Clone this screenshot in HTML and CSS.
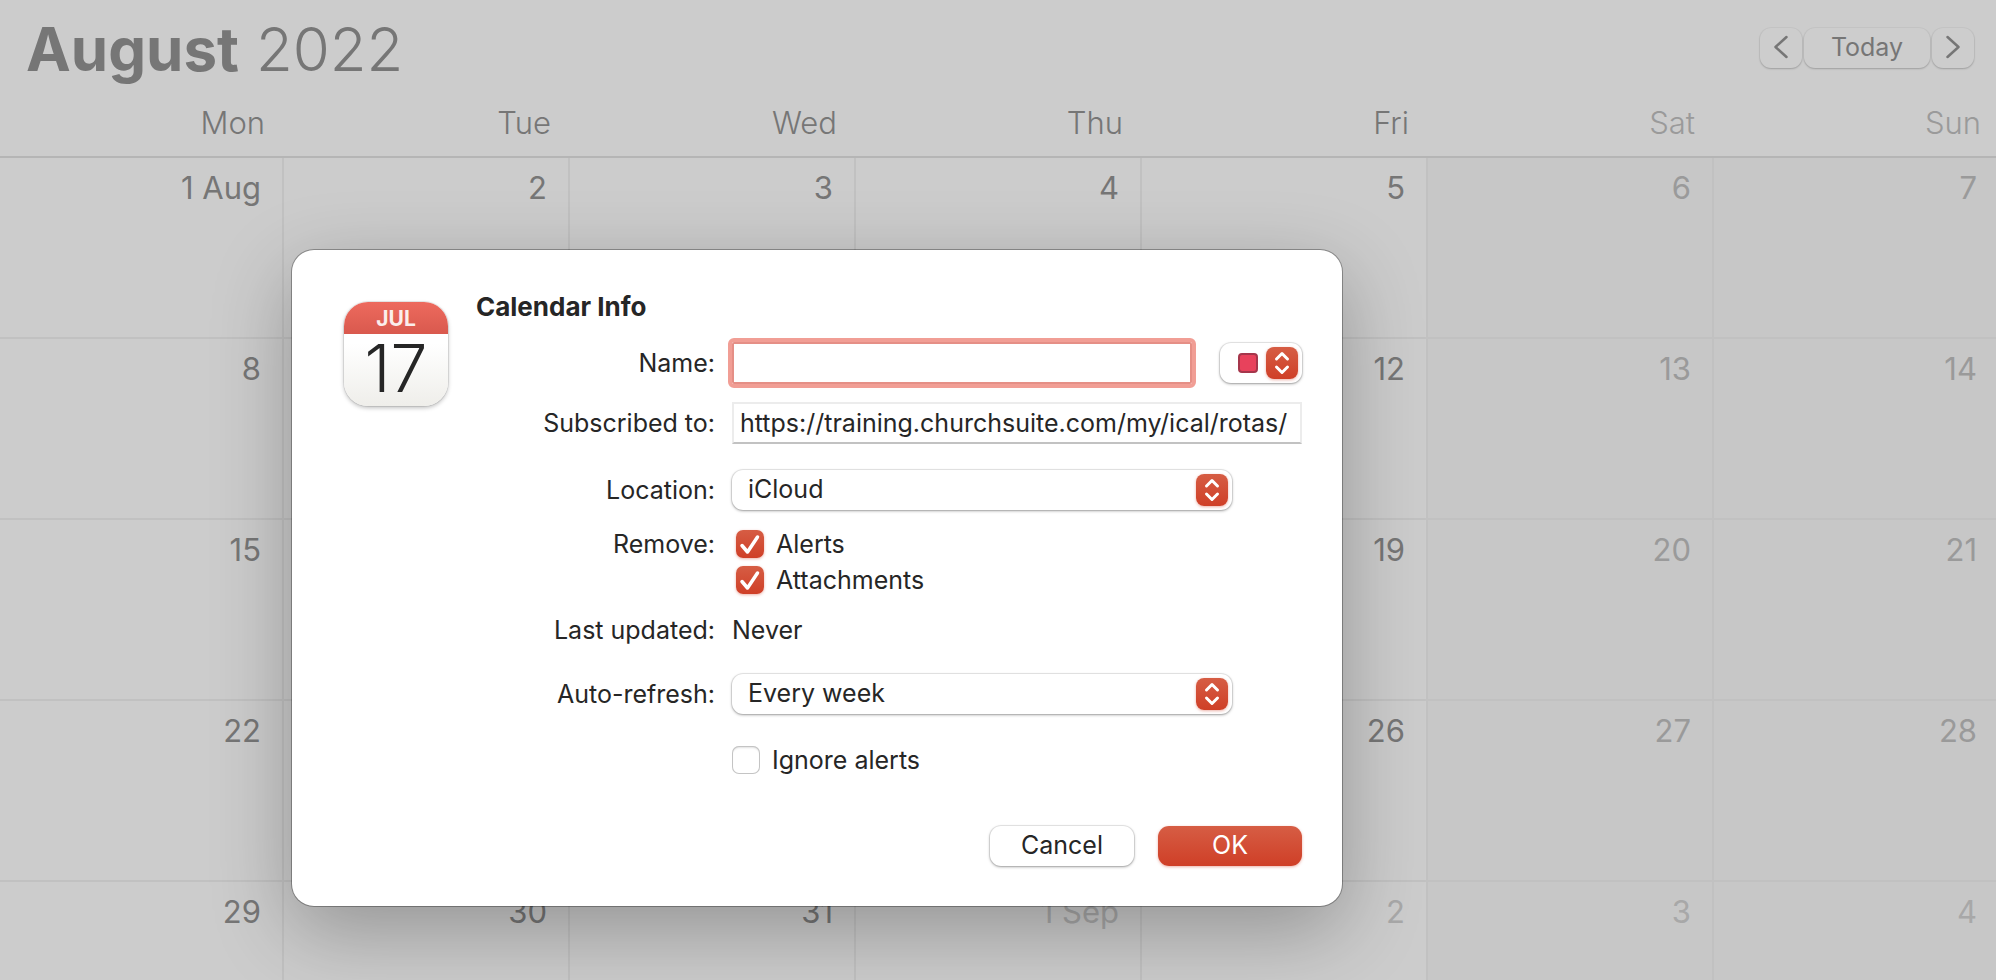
FILE: index.html
```html
<!DOCTYPE html>
<html lang="en">
<head>
    <meta charset="UTF-8">
    <meta name="viewport" content="width=device-width, initial-scale=1.0">
    <title>Calendar</title>
    <link rel="stylesheet" href="styles.css">
</head>
<body>
    <main class="calendar">
        <header class="top-bar">
            <h1 class="month"><strong>August</strong> 2022</h1>
            <div class="nav">
                <button type="button" class="nav-btn" aria-label="Previous month">
                    <svg width="14" height="24" viewBox="0 0 14 24"><path d="M12.500 2 1.500 12l11 10"/></svg>
                </button>
                <button type="button" class="nav-btn today">Today</button>
                <button type="button" class="nav-btn" aria-label="Next month">
                    <svg width="14" height="24" viewBox="0 0 14 24"><path d="M1.500 2 12.500 12 1.500 22"/></svg>
                </button>
            </div>
        </header>
        <table class="month-grid">
            <thead>
                <tr>
                    <th>Mon</th>
                    <th>Tue</th>
                    <th>Wed</th>
                    <th>Thu</th>
                    <th>Fri</th>
                    <th class="off">Sat</th>
                    <th class="off">Sun</th>
                </tr>
            </thead>
            <tbody>
                <tr>
                    <td>1 Aug</td>
                    <td>2</td>
                    <td>3</td>
                    <td>4</td>
                    <td>5</td>
                    <td class="weekend">6</td>
                    <td class="weekend">7</td>
                </tr>
                <tr>
                    <td>8</td>
                    <td></td>
                    <td></td>
                    <td></td>
                    <td>12</td>
                    <td class="weekend">13</td>
                    <td class="weekend">14</td>
                </tr>
                <tr>
                    <td>15</td>
                    <td></td>
                    <td></td>
                    <td></td>
                    <td>19</td>
                    <td class="weekend">20</td>
                    <td class="weekend">21</td>
                </tr>
                <tr>
                    <td>22</td>
                    <td></td>
                    <td></td>
                    <td></td>
                    <td>26</td>
                    <td class="weekend">27</td>
                    <td class="weekend">28</td>
                </tr>
                <tr>
                    <td>29</td>
                    <td>30</td>
                    <td>31</td>
                    <td class="next-month">1 Sep</td>
                    <td class="next-month">2</td>
                    <td class="weekend next-month">3</td>
                    <td class="weekend next-month">4</td>
                </tr>
            </tbody>
        </table>
    </main>

    <form class="dialog" role="dialog" aria-labelledby="dialog-title">
        <div class="app-icon">
            <div class="icon-month">JUL</div>
            <div class="icon-day">17</div>
        </div>
        <div class="fields">
            <h2 class="dialog-title" id="dialog-title">Calendar Info</h2>

            <div class="row">
                <label class="label" for="name">Name:</label>
                <div class="name-line">
                    <input type="text" id="name" class="name-input">
                    <div class="select color-select">
                        <span class="swatch"></span>
                        <select aria-label="Calendar colour">
                            <option value="red" label=" "></option>
                        </select>
                        <svg class="arrows" viewBox="0 0 32 32"><path d="M10.500 12 16 6.500l5.500 5.500M10.500 20l5.500 5.500 5.500-5.500"/></svg>
                    </div>
                </div>
            </div>

            <div class="row">
                <label class="label" for="url">Subscribed to:</label>
                <input type="text" id="url" class="url-input" value="https://training.churchsuite.com/my/ical/rotas/">
            </div>

            <div class="row row-location">
                <label class="label" for="location">Location:</label>
                <div class="select">
                    <select id="location">
                        <option>iCloud</option>
                    </select>
                    <svg class="arrows" viewBox="0 0 32 32"><path d="M10.500 12 16 6.500l5.500 5.500M10.500 20l5.500 5.500 5.500-5.500"/></svg>
                </div>
            </div>

            <div class="row row-tight row-top">
                <span class="label">Remove:</span>
                <div class="checks">
                    <label class="check"><input type="checkbox" checked>Alerts</label>
                    <label class="check"><input type="checkbox" checked>Attachments</label>
                </div>
            </div>

            <div class="row row-tight">
                <span class="label">Last updated:</span>
                <span>Never</span>
            </div>

            <div class="row row-loose">
                <label class="label" for="refresh">Auto-refresh:</label>
                <div class="select">
                    <select id="refresh">
                        <option>Every week</option>
                    </select>
                    <svg class="arrows" viewBox="0 0 32 32"><path d="M10.500 12 16 6.500l5.500 5.500M10.500 20l5.500 5.500 5.500-5.500"/></svg>
                </div>
            </div>

            <div class="row row-loose">
                <span></span>
                <label class="check"><input type="checkbox">Ignore alerts</label>
            </div>

            <div class="actions">
                <button type="button" class="btn">Cancel</button>
                <button type="button" class="btn btn-primary">OK</button>
            </div>
        </div>
    </form>
</body>
</html>
```
FILE: styles.css
```css
* {
    box-sizing: border-box;
}
body {
    margin: 0;
    height: 100vh;
    overflow: hidden;
    position: relative;
    background-color: #cccccc;
    color: #767676;
    font-family: Inter, "Liberation Sans", sans-serif;
    font-size: 25px;
    line-height: 32px;
}
button, input, select {
    font: inherit;
    color: inherit;
    margin: 0;
}

/* Month view */
.calendar {
    height: 100vh;
    overflow: hidden;
}
.top-bar {
    display: flex;
    justify-content: space-between;
    height: 98px;
    padding: 0 22px 0 26px;
}
.month {
    margin: 0;
    font-size: 60px;
    line-height: 98px;
    font-weight: 300;
}
.month strong {
    font-weight: 700;
}
.nav {
    display: flex;
    gap: 2px;
    padding-top: 28px;
}
.nav-btn {
    display: flex;
    align-items: center;
    justify-content: center;
    width: 42px;
    height: 40px;
    padding: 0 2px 2px;
    border: none;
    border-radius: 11px;
    background-color: #cdcdcd;
    box-shadow: 0 0 0 1px rgba(0, 0, 0, 0.03), 0 1px 2px rgba(0, 0, 0, 0.2);
}
.nav-btn svg {
    fill: none;
    stroke: #767676;
    stroke-width: 2.5;
    stroke-linecap: round;
    stroke-linejoin: round;
}
.today {
    width: 126px;
}
.month-grid {
    width: calc(100% + 6px);
    margin-left: -2px;
    table-layout: fixed;
    border-collapse: separate;
    border-spacing: 0;
    text-align: right;
    font-size: 31px;
    line-height: 40px;
}
.month-grid th {
    height: 60px;
    padding: 5px 19px 0 0;
    vertical-align: top;
    text-align: right;
    font-weight: 300;
    border-bottom: 2px solid #b5b5b5;
}
.month-grid td {
    height: 181px;
    padding: 10px 21px 0 0;
    vertical-align: top;
    border-right: 2px solid #c1c1c1;
    border-bottom: 2px solid #c1c1c1;
}
.month-grid .off {
    color: #9a9a9a;
}
.month-grid .weekend {
    background-color: #c7c7c7;
    color: #9a9a9a;
}
.month-grid .next-month {
    color: #a8a8a8;
}

/* Calendar info dialog */
.dialog {
    position: absolute;
    top: 250px;
    left: 292px;
    width: 1050px;
    display: flex;
    gap: 28px;
    padding: 40px 40px 40px 52px;
    border-radius: 22px;
    background-color: #ffffff;
    color: #262626;
    box-shadow: 0 0 0 1px rgba(0, 0, 0, 0.3), 0 24px 80px rgba(0, 0, 0, 0.28);
}
.app-icon {
    flex: none;
    width: 104px;
    height: 104px;
    margin-top: 12px;
    border-radius: 24px;
    text-align: center;
    background: linear-gradient(#ffffff 40%, #efeeea);
    box-shadow: 0 0 0 1px rgba(0, 0, 0, 0.08), 0 2px 4px rgba(0, 0, 0, 0.25);
}
.icon-month {
    height: 32px;
    line-height: 34px;
    border-radius: 24px 24px 0 0;
    font-size: 21px;
    font-weight: 700;
    color: #fbeeec;
    background: linear-gradient(#ed6a5e, #d9594e);
}
.icon-day {
    line-height: 68px;
    font-size: 66px;
    font-weight: 300;
}
.fields {
    flex: 1;
    min-width: 0;
}
.dialog-title {
    margin: 0;
    font-size: 26px;
    line-height: 34px;
    font-weight: 700;
}
.row {
    display: grid;
    grid-template-columns: 239px 1fr;
    column-gap: 17px;
    align-items: center;
    margin-top: 18px;
}
.row-location {
    margin-top: 28px;
}
.row-tight {
    margin-top: 16px;
}
.row-loose {
    margin-top: 28px;
}
.row-top {
    align-items: start;
}
.row-top .label {
    line-height: 36px;
}
.label {
    text-align: right;
}
.name-line {
    display: flex;
    align-items: center;
    gap: 28px;
}
.name-input {
    flex: 1;
    min-width: 0;
    height: 42px;
    padding: 0 8px;
    border: 2px solid #e58f86;
    outline: 4px solid #f19e95;
    border-radius: 2px;
    background-color: #ffffff;
}
.url-input {
    width: 100%;
    height: 42px;
    padding: 0 6px;
    border: 2px solid #ececec;
    border-bottom-color: #c2c2c2;
    background-color: #ffffff;
}
.row-location {
    margin-top: 26px;
}
.select {
    position: relative;
    width: 500px;
    height: 40px;
}
.select select {
    appearance: none;
    width: 100%;
    height: 40px;
    padding: 0 48px 2px 16px;
    border: none;
    border-radius: 11px;
    background-color: #ffffff;
    box-shadow: 0 0 0 1px rgba(0, 0, 0, 0.08), 0 1px 3px rgba(0, 0, 0, 0.35);
}
.color-select {
    width: 82px;
}
.swatch {
    position: absolute;
    top: 10px;
    left: 18px;
    width: 20px;
    height: 20px;
    border: 2px solid #a5364b;
    border-radius: 4px;
    background-color: #e8425c;
    pointer-events: none;
}
.arrows {
    position: absolute;
    top: 4px;
    right: 4px;
    width: 32px;
    height: 32px;
    border-radius: 8px;
    background: linear-gradient(#d65d44, #cf3f27);
    box-shadow: 0 1px 3px rgba(207, 63, 39, 0.4);
    fill: none;
    stroke: #ffffff;
    stroke-width: 3;
    stroke-linecap: round;
    stroke-linejoin: round;
    pointer-events: none;
}
.checks {
    padding-left: 4px;
}
.check {
    display: flex;
    align-items: center;
    gap: 12px;
    height: 36px;
}
.check input {
    appearance: none;
    width: 28px;
    height: 28px;
    border-radius: 7px;
    background-color: #ffffff;
    box-shadow: inset 0 0 0 1px #c4c4c4, inset 0 2px 2px rgba(0, 0, 0, 0.12);
}
.check input:checked {
    background: url("data:image/svg+xml,%3Csvg xmlns='http://www.w3.org/2000/svg' viewBox='0 0 28 28'%3E%3Cpath d='M6 15.500l5.500 6.500L21.500 7' fill='none' stroke='white' stroke-width='3.500' stroke-linecap='round' stroke-linejoin='round'/%3E%3C/svg%3E"), linear-gradient(#d65d44, #cf3f27);
    box-shadow: 0 1px 3px rgba(207, 63, 39, 0.4);
}
.actions {
    display: flex;
    justify-content: flex-end;
    gap: 24px;
    margin-top: 48px;
}
.btn {
    width: 144px;
    height: 40px;
    padding: 0 0 2px;
    border: none;
    border-radius: 11px;
    background-color: #ffffff;
    box-shadow: 0 0 0 1px rgba(0, 0, 0, 0.08), 0 1px 3px rgba(0, 0, 0, 0.35);
}
.btn-primary {
    color: #ffffff;
    background: linear-gradient(#d65d44, #cf3f27);
    box-shadow: 0 1px 3px rgba(207, 63, 39, 0.4);
}
```
